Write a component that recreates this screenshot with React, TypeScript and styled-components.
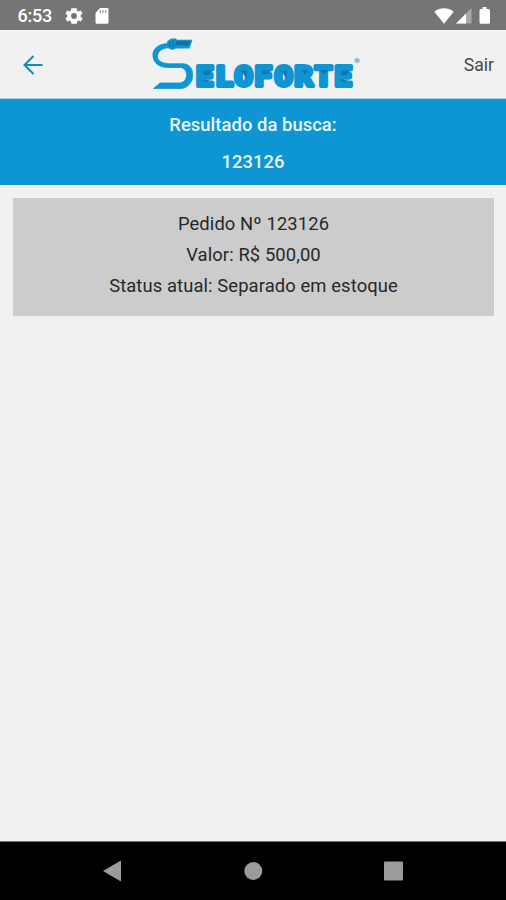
import React from "react";
import styled, { createGlobalStyle } from "styled-components";

const blue = "#0e95d3";

const GlobalStyle = createGlobalStyle`
  body { margin: 0; background: #f1f1f1; }
  * { box-sizing: border-box; }
`;

const Screen = styled.div`
  display: flex;
  flex-direction: column;
  width: 506px;
  height: 900px;
  overflow: hidden;
  background: #f1f1f1;
  font-family: Roboto, "Liberation Sans", sans-serif;
`;

const StatusBar = styled.header`
  display: flex;
  align-items: center;
  height: 30px;
  padding: 1px 15px 0 17.5px;
  background: #757575;
  color: #fff;
`;

const Clock = styled.span`
  width: 47px;
  font-size: 18px;
  font-weight: 500;
  line-height: 28px;
  letter-spacing: -0.2px;
`;

const StatusIcon = styled.svg<{ $gap?: number }>`
  display: block;
  flex: none;
  margin-left: ${({ $gap = 0 }) => $gap}px;
  fill: #fff;
`;

const Spacer = styled.div`
  flex: 1;
`;

const AppBar = styled.nav`
  display: grid;
  grid-template-columns: 150px 1fr 140px;
  align-items: center;
  height: 69px;
  border-top: 1px solid #fafafa;
  border-bottom: 1px solid #a9d4e8;
`;

const BackButton = styled.button`
  display: flex;
  width: 24px;
  height: 24px;
  margin-left: 21px;
  padding: 0;
  border: 0;
  background: none;
`;

const LogoutButton = styled.button`
  justify-self: end;
  margin-right: 12px;
  padding: 0;
  border: 0;
  background: none;
  color: #484848;
  font: 400 17.6px/22px Roboto, sans-serif;
`;

const Logo = styled.svg`
  display: block;
  width: 216px;
  height: 60px;
`;

const LogoText = styled.text`
  font-family: "DejaVu Sans Mono", monospace;
  font-size: 26.5px;
  font-weight: 700;
  stroke-linejoin: round;
`;

const Banner = styled.section`
  display: flex;
  flex-direction: column;
  align-items: center;
  height: 86px;
  padding-top: 14px;
  gap: 13px;
  background: ${blue};
  color: #e9f6fd;
`;

const BannerLine = styled.div`
  font-size: 18.4px;
  font-weight: 500;
  line-height: 24px;
  letter-spacing: 0.05px;
`;

const Content = styled.main`
  flex: 1;
  padding: 13px 12px 0 13px;
`;

const OrderCard = styled.article`
  display: flex;
  flex-direction: column;
  align-items: center;
  height: 118px;
  padding-top: 10px;
  background: #ccc;
  color: #282828;
`;

const OrderLine = styled.div`
  font-size: 18.4px;
  line-height: 31px;
  letter-spacing: 0.1px;
  white-space: nowrap;
`;

const NavigationBar = styled.footer`
  display: flex;
  align-items: center;
  justify-content: space-between;
  height: 59px;
  padding: 0 102px 0 102px;
  border-top: 1px solid #777;
  background: #000;
`;

const NavIcon = styled.svg`
  display: block;
  width: 22px;
  height: 22px;
  fill: #9b9b9b;
`;

function SeloforteLogo() {
  return (
    <Logo viewBox="150 35 216 60" role="img" aria-label="Seloforte">
      <path d="M175 43.5 H169 C157 43.5 152 50 153 56.5 C154 64 160 67.5 168 67.5 H180 C189 67.5 189 83 179 83 H160 L153.5 88.5 H180 C196 88.5 197 63.8 183 63.8 H172 C162 63.8 157 61 157.5 56 C158 50.5 163 47.5 172 47.5 H176 Z"
        fill={blue} stroke={blue} strokeWidth="0.8" strokeLinejoin="round" />
      <path d="M167 41.5 L171 38.5 H176 L177 39.7 H192.5 L189.5 48.5 H176 L172 50 L168 48 Z" fill={blue} />
      <path d="M176 41.2 H191 L188 45.5 H175 Z" fill="#146e9f" />
      <path d="M170 47 V41.5 M173 48 V40" stroke="#146e9f" strokeWidth="1" />
      <LogoText transform="scale(1.15 1)" x="170.3 187 204 221.2 238.7 256 273.3 290.6" y="86"
        fill={blue} stroke={blue} strokeWidth="4">ELOFORTE</LogoText>
      <g fill="#146e9f" opacity=".85">
        <path d="M203.5 70.5 H212.5 L208.5 75 H203.5 Z M204 79.5 H211 L207 81.5 H204 Z" />
        <path d="M241 70.5 H246.5 V78 L243.5 74.5 Z M262 70.5 H271 L267 74 H262 Z" />
        <path d="M281 70.5 H286.5 V78 L283.5 74.5 Z M301 70.5 H308 L305 74.5 Z" />
        <path d="M319 70 H328 L324 74 Z M341 70.5 H350 L346 75 H341 Z M341 79.5 H349 L345 81.5 H341 Z" />
      </g>
      <circle cx="357" cy="60.5" r="2.8" fill="#a4c5d2" />
      <circle cx="357" cy="60.5" r="1.2" fill="#83abbb" />
    </Logo>
  );
}

export default function App() {
  return (
    <>
      <GlobalStyle />
      <Screen>
        <StatusBar>
          <Clock>6:53</Clock>
          <StatusIcon width="18" height="18" viewBox="2 2 20 20">
            <path fillRule="evenodd" d="M19.4 13a7.8 7.8 0 0 0 0-2l2.1-1.6-2-3.5-2.5 1a8 8 0 0 0-1.7-1L15 3.3H9l-.4 2.6a8 8 0 0 0-1.7 1l-2.5-1-2 3.5L4.6 11a7.8 7.8 0 0 0 0 2l-2.1 1.6 2 3.5 2.5-1a8 8 0 0 0 1.7 1l.4 2.6h6l.4-2.6a8 8 0 0 0 1.7-1l2.5 1 2-3.5ZM12 15.2a3.2 3.2 0 1 1 0-6.4 3.2 3.2 0 0 1 0 6.4Z" />
          </StatusIcon>
          <StatusIcon $gap={12} width="14" height="16" viewBox="0 0 14 16">
            <path d="M5 0h7.2Q13.5 0 13.5 1.3v13.2q0 1.3-1.3 1.3H1.8Q.5 15.8.5 14.5V5Z" />
            <path d="M5.3 2v3M8 2v3M10.7 2v3" stroke="#999" strokeWidth="1.2" />
          </StatusIcon>
          <Spacer />
          <StatusIcon width="20" height="16" viewBox="0 0 20 16">
            <path d="M.3 3.7C6-.9 14-.9 19.7 3.7L10 15.8Z" />
          </StatusIcon>
          <StatusIcon $gap={2} width="16" height="16" viewBox="0 0 16 16">
            <path d="M0 15.5 15.5 0v15.5Z" fill="#a8a8a8" />
            <path d="M0 15.5 10 5.5v10Z" />
          </StatusIcon>
          <StatusIcon $gap={7} width="12" height="17" viewBox="0 0 12 17">
            <path d="M3.5 0h4v2h2q1.5 0 1.5 1.5v11.7q0 1.5-1.5 1.5h-8Q.5 16.7.5 15.2V3.5Q.5 2 2 2h1.5Z" />
          </StatusIcon>
        </StatusBar>
        <AppBar>
          <BackButton aria-label="Voltar">
            <svg width="24" height="24" viewBox="0 0 24 24" fill="none" stroke="#1688c6" strokeWidth="2">
              <path d="M21.5 12H3.5M12.5 3 3.5 12l9 9" />
            </svg>
          </BackButton>
          <SeloforteLogo />
          <LogoutButton>Sair</LogoutButton>
        </AppBar>
        <Banner>
          <BannerLine>Resultado da busca:</BannerLine>
          <BannerLine>123126</BannerLine>
        </Banner>
        <Content>
          <OrderCard>
            <OrderLine>Pedido Nº 123126</OrderLine>
            <OrderLine>Valor: R$ 500,00</OrderLine>
            <OrderLine>Status atual: Separado em estoque</OrderLine>
          </OrderCard>
        </Content>
        <NavigationBar>
          <NavIcon viewBox="0 0 22 22"><path d="M1 11 18 1q1-.5 1 .5v19q0 1-1 .5Z" /></NavIcon>
          <NavIcon viewBox="0 0 22 22"><circle cx="11.3" cy="11" r="9" /></NavIcon>
          <NavIcon viewBox="0 0 22 22"><rect x="2" y="1.5" width="19" height="19" rx="1" /></NavIcon>
        </NavigationBar>
      </Screen>
    </>
  );
}
